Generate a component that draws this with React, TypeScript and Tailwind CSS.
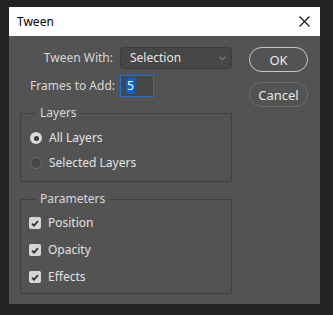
import React from 'react'

const font = { fontFamily: '"Segoe UI", "Noto Sans", "Liberation Sans", sans-serif' }

const Radio = ({ checked, label }: { checked?: boolean; label: string }) => (
  <div className="flex h-[20px] items-center">
    {checked ? (
      <span className="flex h-[12px] w-[12px] items-center justify-center rounded-full bg-[#d9d9d9]">
        <span className="h-[5px] w-[5px] rounded-full bg-[#3a3a3a]" />
      </span>
    ) : (
      <span className="h-[12px] w-[12px] rounded-full border border-[#6c6c6c] bg-[#474747]" />
    )}
    <span className="ml-[7px] text-[#e2e2e2]">{label}</span>
  </div>
)

const Check = ({ label }: { label: string }) => (
  <div className="flex h-[20px] items-center">
    <span className="flex h-[12px] w-[12px] items-center justify-center rounded-[2px] bg-[#d6d6d6]">
      <svg width="8" height="7" viewBox="0 0 8 7">
        <path d="M1 3.6 L3 5.6 L7 1.2" fill="none" stroke="#333" strokeWidth="1.8" />
      </svg>
    </span>
    <span className="ml-[7px] text-[#e2e2e2]">{label}</span>
  </div>
)

export default function App() {
  return (
    <div
      className="h-[315px] w-[333px] bg-[#232323] pl-[9px] pt-[7px] text-[12px] leading-[16px]"
      style={font}
    >
      <div className="flex h-[297px] w-[311px] flex-col">
        <div className="flex h-[29px] items-center justify-between bg-white pl-[8px] pr-[10px]">
          <span className="text-black">Tween</span>
          <svg width="11" height="11" viewBox="0 0 11 11">
            <path d="M0.5 0.5 L10.5 10.5 M10.5 0.5 L0.5 10.5" stroke="#111" strokeWidth="1.1" />
          </svg>
        </div>
        <div className="flex flex-1 bg-[#535353] pl-[11px] pr-[12px] pt-[11px]">
          <div className="flex w-[212px] flex-col">
            <div className="flex h-[22px] items-center">
              <span className="w-[93px] whitespace-nowrap text-right text-[#d8d8d8]">Tween With:</span>
              <div className="ml-[7px] flex h-[22px] w-[112px] items-center justify-between rounded-[3px] border border-[#3d3d3d] bg-[#474747] pl-[9px] pr-[5px] text-[#e6e6e6]">
                <span>Selection</span>
                <svg width="7" height="5" viewBox="0 0 7 5">
                  <path d="M0.5 0.8 L3.5 3.8 L6.5 0.8" fill="none" stroke="#a8a8a8" strokeWidth="1" />
                </svg>
              </div>
            </div>
            <div className="mt-[6px] flex h-[22px] items-center">
              <span className="w-[95px] whitespace-nowrap text-right text-[#d8d8d8]">Frames to Add:</span>
              <div className="ml-[5px] flex h-[22px] w-[34px] items-center border border-[#1473e6] bg-[#474747] pl-[5px]">
                <span className="bg-[#0b63c9] px-[1px] text-white">5</span>
              </div>
            </div>
            <fieldset className="mt-[8px] border border-[#404040] pb-[8px] pl-[9px]">
              <legend className="ml-[6px] px-[4px] text-[#d8d8d8]">Layers</legend>
              <div className="mt-[7px] flex flex-col gap-[5px]">
                <Radio checked label="All Layers" />
                <Radio label="Selected Layers" />
              </div>
            </fieldset>
            <fieldset className="mt-[9px] border border-[#404040] pb-[6px] pl-[8px]">
              <legend className="ml-[7px] px-[4px] text-[#d8d8d8]">Parameters</legend>
              <div className="mt-[6px] flex flex-col gap-[7px]">
                <Check label="Position" />
                <Check label="Opacity" />
                <Check label="Effects" />
              </div>
            </fieldset>
          </div>
          <div className="ml-[17px] flex flex-col gap-[10px]">
            <button className="h-[25px] w-[59px] rounded-full border-[1.5px] border-[#c8c8c8] text-[13px] text-[#e8e8e8]">
              OK
            </button>
            <button className="h-[25px] w-[59px] rounded-full border-[1.5px] border-[#6e6e6e] text-[13px] text-[#e8e8e8]">
              Cancel
            </button>
          </div>
        </div>
      </div>
    </div>
  )
}
